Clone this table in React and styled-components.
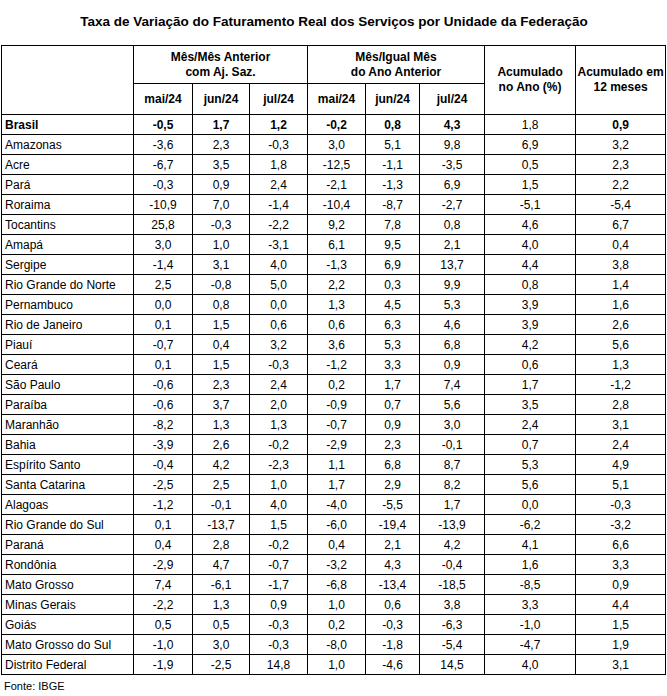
import styled, { createGlobalStyle } from 'styled-components';

const GlobalStyle = createGlobalStyle`
  html, body {
    margin: 0;
    padding: 0;
    background: #ffffff;
    font-family: "Liberation Sans", Arial, sans-serif;
    color: #000;
  }
`;

const rows = [
  ['Amazonas', '-3,6', '2,3', '-0,3', '3,0', '5,1', '9,8', '6,9', '3,2'],
  ['Acre', '-6,7', '3,5', '1,8', '-12,5', '-1,1', '-3,5', '0,5', '2,3'],
  ['Pará', '-0,3', '0,9', '2,4', '-2,1', '-1,3', '6,9', '1,5', '2,2'],
  ['Roraima', '-10,9', '7,0', '-1,4', '-10,4', '-8,7', '-2,7', '-5,1', '-5,4'],
  ['Tocantins', '25,8', '-0,3', '-2,2', '9,2', '7,8', '0,8', '4,6', '6,7'],
  ['Amapá', '3,0', '1,0', '-3,1', '6,1', '9,5', '2,1', '4,0', '0,4'],
  ['Sergipe', '-1,4', '3,1', '4,0', '-1,3', '6,9', '13,7', '4,4', '3,8'],
  ['Rio Grande do Norte', '2,5', '-0,8', '5,0', '2,2', '0,3', '9,9', '0,8', '1,4'],
  ['Pernambuco', '0,0', '0,8', '0,0', '1,3', '4,5', '5,3', '3,9', '1,6'],
  ['Rio de Janeiro', '0,1', '1,5', '0,6', '0,6', '6,3', '4,6', '3,9', '2,6'],
  ['Piauí', '-0,7', '0,4', '3,2', '3,6', '5,3', '6,8', '4,2', '5,6'],
  ['Ceará', '0,1', '1,5', '-0,3', '-1,2', '3,3', '0,9', '0,6', '1,3'],
  ['São Paulo', '-0,6', '2,3', '2,4', '0,2', '1,7', '7,4', '1,7', '-1,2'],
  ['Paraíba', '-0,6', '3,7', '2,0', '-0,9', '0,7', '5,6', '3,5', '2,8'],
  ['Maranhão', '-8,2', '1,3', '1,3', '-0,7', '0,9', '3,0', '2,4', '3,1'],
  ['Bahia', '-3,9', '2,6', '-0,2', '-2,9', '2,3', '-0,1', '0,7', '2,4'],
  ['Espírito Santo', '-0,4', '4,2', '-2,3', '1,1', '6,8', '8,7', '5,3', '4,9'],
  ['Santa Catarina', '-2,5', '2,5', '1,0', '1,7', '2,9', '8,2', '5,6', '5,1'],
  ['Alagoas', '-1,2', '-0,1', '4,0', '-4,0', '-5,5', '1,7', '0,0', '-0,3'],
  ['Rio Grande do Sul', '0,1', '-13,7', '1,5', '-6,0', '-19,4', '-13,9', '-6,2', '-3,2'],
  ['Paraná', '0,4', '2,8', '-0,2', '0,4', '2,1', '4,2', '4,1', '6,6'],
  ['Rondônia', '-2,9', '4,7', '-0,7', '-3,2', '4,3', '-0,4', '1,6', '3,3'],
  ['Mato Grosso', '7,4', '-6,1', '-1,7', '-6,8', '-13,4', '-18,5', '-8,5', '0,9'],
  ['Minas Gerais', '-2,2', '1,3', '0,9', '1,0', '0,6', '3,8', '3,3', '4,4'],
  ['Goiás', '0,5', '0,5', '-0,3', '0,2', '-0,3', '-6,3', '-1,0', '1,5'],
  ['Mato Grosso do Sul', '-1,0', '3,0', '-0,3', '-8,0', '-1,8', '-5,4', '-4,7', '1,9'],
  ['Distrito Federal', '-1,9', '-2,5', '14,8', '1,0', '-4,6', '14,5', '4,0', '3,1'],
];

const brasil = ['-0,5', '1,7', '1,2', '-0,2', '0,8', '4,3', '1,8', '0,9'];
const brasilBold = [true, true, true, true, true, true, false, true];
const widths = [132, 59, 57, 58, 58, 54, 65, 91, 90];
const months = ['mai/24', 'jun/24', 'jul/24', 'mai/24', 'jun/24', 'jul/24'];

export default function App() {
  return (
    <Page>
      <GlobalStyle />
      <Title>Taxa de Variação do Faturamento Real dos Serviços por Unidade da Federação</Title>
      <Table>
        <colgroup>
          {widths.map((w, i) => (
            <col key={i} style={{ width: w }} />
          ))}
        </colgroup>
        <thead>
          <GroupRow>
            <HeadCell rowSpan={2} />
            <HeadCell colSpan={3}>Mês/Mês Anterior<br />com Aj. Saz.</HeadCell>
            <HeadCell colSpan={3}>Mês/Igual Mês<br />do Ano Anterior</HeadCell>
            <HeadCell rowSpan={2}>Acumulado<br />no Ano (%)</HeadCell>
            <HeadCell rowSpan={2}>Acumulado em<br />12 meses</HeadCell>
          </GroupRow>
          <MonthRow>
            {months.map((m, i) => (
              <HeadCell key={i}>{m}</HeadCell>
            ))}
          </MonthRow>
        </thead>
        <tbody>
          <DataRow>
            <NameCell $bold>Brasil</NameCell>
            {brasil.map((v, i) => (
              <ValueCell key={i} $bold={brasilBold[i]}>{v}</ValueCell>
            ))}
          </DataRow>
          {rows.map(([name, ...values]) => (
            <DataRow key={name}>
              <NameCell>{name}</NameCell>
              {values.map((v, i) => (
                <ValueCell key={i}>{v}</ValueCell>
              ))}
            </DataRow>
          ))}
        </tbody>
      </Table>
      <Source>Fonte: IBGE</Source>
    </Page>
  );
}

const Page = styled.div`
  width: 667px;
  padding: 14px 0 0 1px;
  box-sizing: border-box;
`;

const Title = styled.h1`
  margin: 0 0 15px;
  font-size: 13.5px;
  line-height: 16px;
  font-weight: 700;
  text-align: center;
  color: #000;
`;

const Table = styled.table`
  border-collapse: collapse;
  table-layout: fixed;
  width: 665px;
  font-size: 12px;
  color: #000;
`;

const GroupRow = styled.tr`
  height: 38px;
`;

const MonthRow = styled.tr`
  height: 31px;
`;

const HeadCell = styled.th`
  border: 1px solid #000;
  padding: 0 1px;
  font-weight: 700;
  text-align: center;
  vertical-align: middle;
  line-height: 15px;
`;

const DataRow = styled.tr`
  height: 20px;
`;

const NameCell = styled.td`
  border: 1px solid #000;
  padding: 0 3px;
  text-align: left;
  white-space: nowrap;
  font-weight: ${({ $bold }) => ($bold ? 700 : 400)};
  line-height: 18px;
`;

const ValueCell = styled.td`
  border: 1px solid #000;
  padding: 0;
  text-align: center;
  font-weight: ${({ $bold }) => ($bold ? 700 : 400)};
  line-height: 18px;
`;

const Source = styled.div`
  margin: 4px 0 0 3px;
  font-size: 11px;
  line-height: 14px;
`;
